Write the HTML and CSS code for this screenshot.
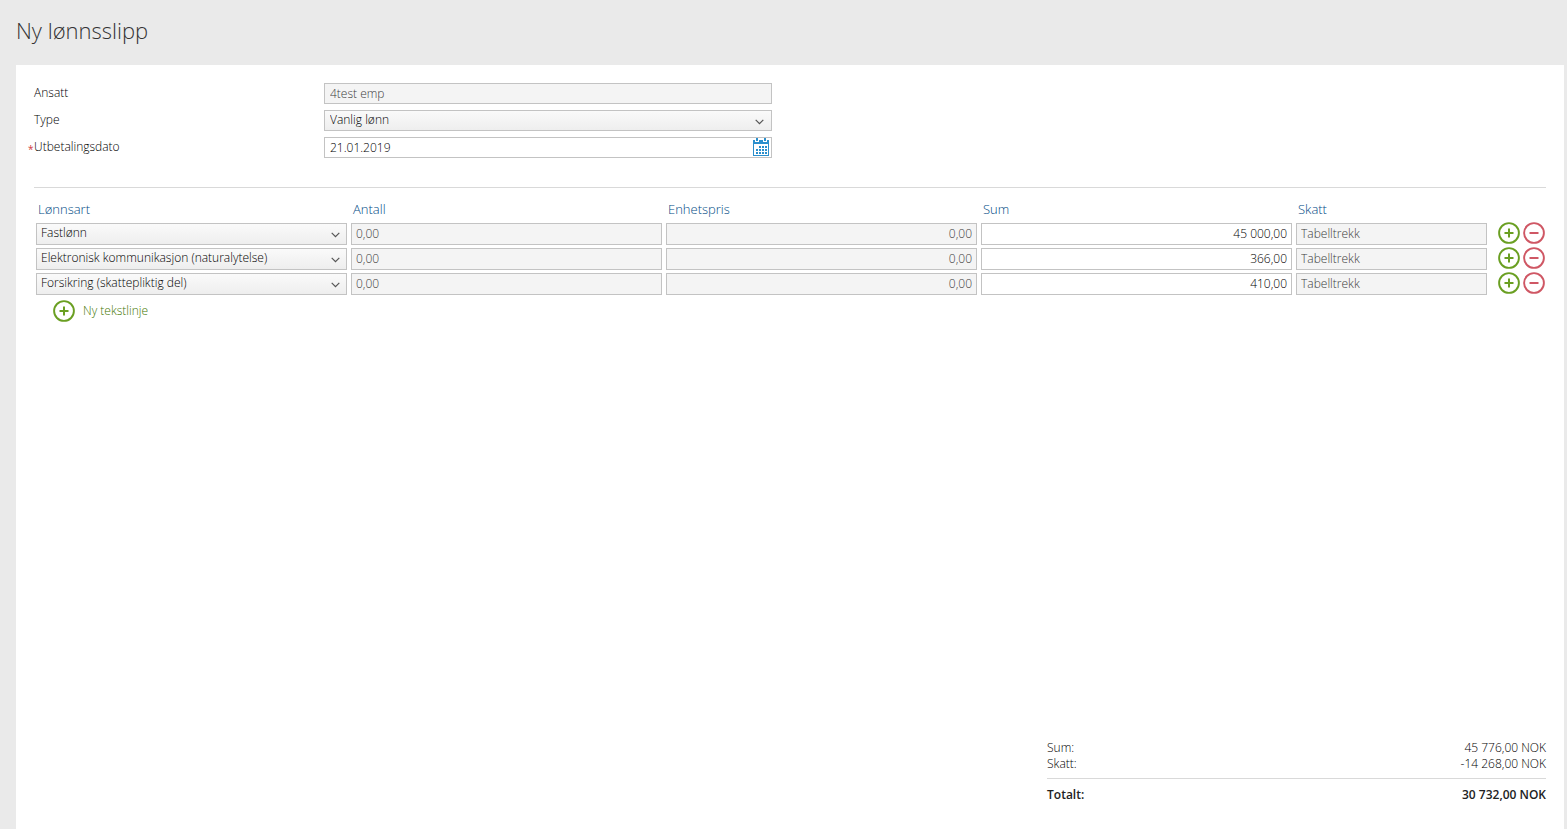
FILE: index.html
```html
<!DOCTYPE html>
<html lang="no">
<head>
<meta charset="utf-8">
<meta name="viewport" content="width=device-width, initial-scale=1">
<title>Ny lønnsslipp</title>
<link rel="stylesheet" href="styles.css">
</head>
<body>
<svg class="sprite" aria-hidden="true">
  <symbol id="plus" viewBox="0 0 22 22"><circle cx="11" cy="11" r="9.9" fill="none" stroke="currentColor" stroke-width="1.9"/><path d="M11 6.5v9M6.5 11h9" stroke="currentColor" stroke-width="2"/></symbol>
  <symbol id="minus" viewBox="0 0 22 22"><circle cx="11" cy="11" r="9.9" fill="none" stroke="currentColor" stroke-width="1.9"/><path d="M6.5 11h9" stroke="currentColor" stroke-width="2"/></symbol>
  <symbol id="chevron" viewBox="0 0 9 6"><path d="M.7.8 4.5 4.7 8.3.8" fill="none" stroke="currentColor" stroke-width="1.2"/></symbol>
</svg>
<header class="page-header"><h1 class="title">Ny lønnsslipp</h1></header>
<main class="panel">
  <form class="payslip">
    <div class="fields">
      <div class="field">
        <label class="label" for="employee">Ansatt</label>
        <div class="control"><input class="input" id="employee" type="text" value="4test emp" disabled></div>
      </div>
      <div class="field">
        <label class="label" for="type">Type</label>
        <div class="control"><select class="input select" id="type"><option>Vanlig lønn</option></select><svg class="chevron"><use href="#chevron"/></svg></div>
      </div>
      <div class="field">
        <label class="label required" for="date">Utbetalingsdato</label>
        <div class="control"><input class="input" id="date" type="text" value="21.01.2019">
          <button class="calendar" type="button" aria-label="Velg dato"><svg viewBox="0 0 16 18" width="16" height="18"><path fill="#2a8fcd" d="M0 2h16v16H0z"/><path fill="#fff" d="M2 1h4v3H2zM10 1h4v3h-4z"/><path fill="#2a8fcd" d="M3 0h2v3H3zM11 0h2v3h-2z"/><path fill="#fff" d="M1 6h14v11H1z"/><path fill="#2a8fcd" d="M6 8h2v2H6zM9 8h2v2H9zM12 8h2v2h-2zM3 11h2v2H3zM6 11h2v2H6zM9 11h2v2H9zM12 11h2v2h-2zM3 14h2v2H3zM6 14h2v2H6zM9 14h2v2H9zM12 14h2v2h-2z"/></svg></button>
        </div>
      </div>
    </div>
    <table class="lines">
      <colgroup><col><col><col><col><col class="col-tax"><col class="col-actions"></colgroup>
      <thead><tr><th>Lønnsart</th><th>Antall</th><th>Enhetspris</th><th>Sum</th><th>Skatt</th><td></td></tr></thead>
      <tbody>
        <tr>
          <td><div class="control"><select class="input select" aria-label="Lønnsart"><option>Fastlønn</option></select><svg class="chevron"><use href="#chevron"/></svg></div></td>
          <td><input class="input" aria-label="Antall" value="0,00" disabled></td>
          <td><input class="input number" aria-label="Enhetspris" value="0,00" disabled></td>
          <td><input class="input number" aria-label="Sum" value="45 000,00"></td>
          <td><input class="input" aria-label="Skatt" value="Tabelltrekk" disabled></td>
          <td><div class="actions"><button class="icon-button add" type="button" aria-label="Legg til linje"><svg><use href="#plus"/></svg></button><button class="icon-button remove" type="button" aria-label="Fjern linje"><svg><use href="#minus"/></svg></button></div></td>
        </tr>
        <tr>
          <td><div class="control"><select class="input select" aria-label="Lønnsart"><option>Elektronisk kommunikasjon (naturalytelse)</option></select><svg class="chevron"><use href="#chevron"/></svg></div></td>
          <td><input class="input" aria-label="Antall" value="0,00" disabled></td>
          <td><input class="input number" aria-label="Enhetspris" value="0,00" disabled></td>
          <td><input class="input number" aria-label="Sum" value="366,00"></td>
          <td><input class="input" aria-label="Skatt" value="Tabelltrekk" disabled></td>
          <td><div class="actions"><button class="icon-button add" type="button" aria-label="Legg til linje"><svg><use href="#plus"/></svg></button><button class="icon-button remove" type="button" aria-label="Fjern linje"><svg><use href="#minus"/></svg></button></div></td>
        </tr>
        <tr>
          <td><div class="control"><select class="input select" aria-label="Lønnsart"><option>Forsikring (skattepliktig del)</option></select><svg class="chevron"><use href="#chevron"/></svg></div></td>
          <td><input class="input" aria-label="Antall" value="0,00" disabled></td>
          <td><input class="input number" aria-label="Enhetspris" value="0,00" disabled></td>
          <td><input class="input number" aria-label="Sum" value="410,00"></td>
          <td><input class="input" aria-label="Skatt" value="Tabelltrekk" disabled></td>
          <td><div class="actions"><button class="icon-button add" type="button" aria-label="Legg til linje"><svg><use href="#plus"/></svg></button><button class="icon-button remove" type="button" aria-label="Fjern linje"><svg><use href="#minus"/></svg></button></div></td>
        </tr>
      </tbody>
    </table>
    <button class="new-line" type="button"><svg><use href="#plus"/></svg><span>Ny tekstlinje</span></button>
    <dl class="summary">
      <div class="sum-row"><dt>Sum:</dt><dd>45 776,00 NOK</dd></div>
      <div class="sum-row"><dt>Skatt:</dt><dd>-14 268,00 NOK</dd></div>
      <div class="sum-row total"><dt>Totalt:</dt><dd>30 732,00 NOK</dd></div>
    </dl>
  </form>
</main>
</body>
</html>
```
FILE: styles.css
```css
* {
  box-sizing: border-box;
}

body {
  margin: 0;
  min-height: 100vh;
  display: flex;
  flex-direction: column;
  background: #eaeaea;
  color: #000;
  font: 300 12px/16px "Open Sans", sans-serif;
}

.sprite {
  display: none;
}

.page-header {
  padding: 15px 16px 20px;
}

.title {
  margin: 0;
  color: #333;
  font-size: 22px;
  line-height: 30px;
  font-weight: 300;
}

.panel {
  flex: 1;
  display: flex;
  margin: 0 3px 0 16px;
  padding: 18px 18px 26px;
  background: #fff;
}

.payslip {
  flex: 1;
  min-width: 0;
  display: flex;
  flex-direction: column;
}

.fields {
  display: flex;
  flex-direction: column;
  gap: 6px;
  padding-bottom: 29px;
  border-bottom: 1px solid #d9d9d9;
}

.field {
  display: flex;
  height: 21px;
}

.label {
  flex: 0 0 290px;
  line-height: 20px;
}

.required::before {
  content: "*";
  display: inline-block;
  width: 6px;
  margin-left: -6px;
  color: #d0393e;
  font-size: 10px;
  font-weight: 400;
  line-height: 12px;
  vertical-align: -2px;
}

.control {
  position: relative;
}

.field .control {
  flex: 0 1 448px;
}

.input {
  display: block;
  width: 100%;
  height: 22px;
  margin: 0;
  padding: 0 4px;
  border: 1px solid #c3c3c3;
  border-radius: 0;
  background: #fff;
  color: #000;
  font: inherit;
}

.field .input {
  height: 21px;
  padding: 0 5px;
}

.input:disabled {
  background: #f4f4f4;
  color: #3c3c3c;
}

.input.select {
  appearance: none;
  padding-bottom: 1px;
  background: linear-gradient(#fafafa, #eeeeee);
}

.field .input.select {
  padding-bottom: 2px;
}

.number {
  text-align: right;
}

.chevron {
  position: absolute;
  right: 7px;
  top: 9px;
  width: 9px;
  height: 6px;
  color: #555;
  pointer-events: none;
}

.field .chevron {
  right: 8px;
}

.calendar {
  position: absolute;
  right: 3px;
  top: 1px;
  padding: 0;
  border: 0;
  background: none;
}

.calendar svg,
.icon-button svg {
  display: block;
}

.lines {
  width: 100%;
  margin-top: 9px;
  table-layout: fixed;
  border-collapse: collapse;
}

.col-tax {
  width: 195px;
}

.col-actions {
  width: 57px;
}

.lines th {
  height: 24px;
  padding: 0 4px;
  color: #004a85;
  font-size: 13px;
  font-weight: 300;
  text-align: left;
}

.lines thead td {
  height: 24px;
}

.lines td {
  height: 25px;
  padding: 0 2px;
}

.actions {
  display: flex;
  justify-content: flex-end;
  gap: 3px;
  margin-right: -1px;
  padding-bottom: 2px;
}

.icon-button {
  padding: 0;
  border: 0;
  background: none;
}

.icon-button svg,
.new-line svg {
  width: 22px;
  height: 22px;
}

.add,
.new-line svg {
  color: #6a9f22;
}

.remove {
  color: #cf5764;
}

.new-line {
  display: flex;
  align-items: center;
  align-self: flex-start;
  gap: 8px;
  margin-top: 4px;
  margin-left: 19px;
  padding: 0;
  border: 0;
  background: none;
  color: #3f7600;
  font: inherit;
}

.summary {
  width: 33%;
  margin: auto 0 0 auto;
}

.sum-row {
  display: flex;
  justify-content: space-between;
}

.sum-row dd {
  margin: 0;
}

.total {
  margin-top: 6px;
  padding-top: 8px;
  border-top: 1px solid #d9d9d9;
  color: #222;
  font-weight: 600;
}
```
